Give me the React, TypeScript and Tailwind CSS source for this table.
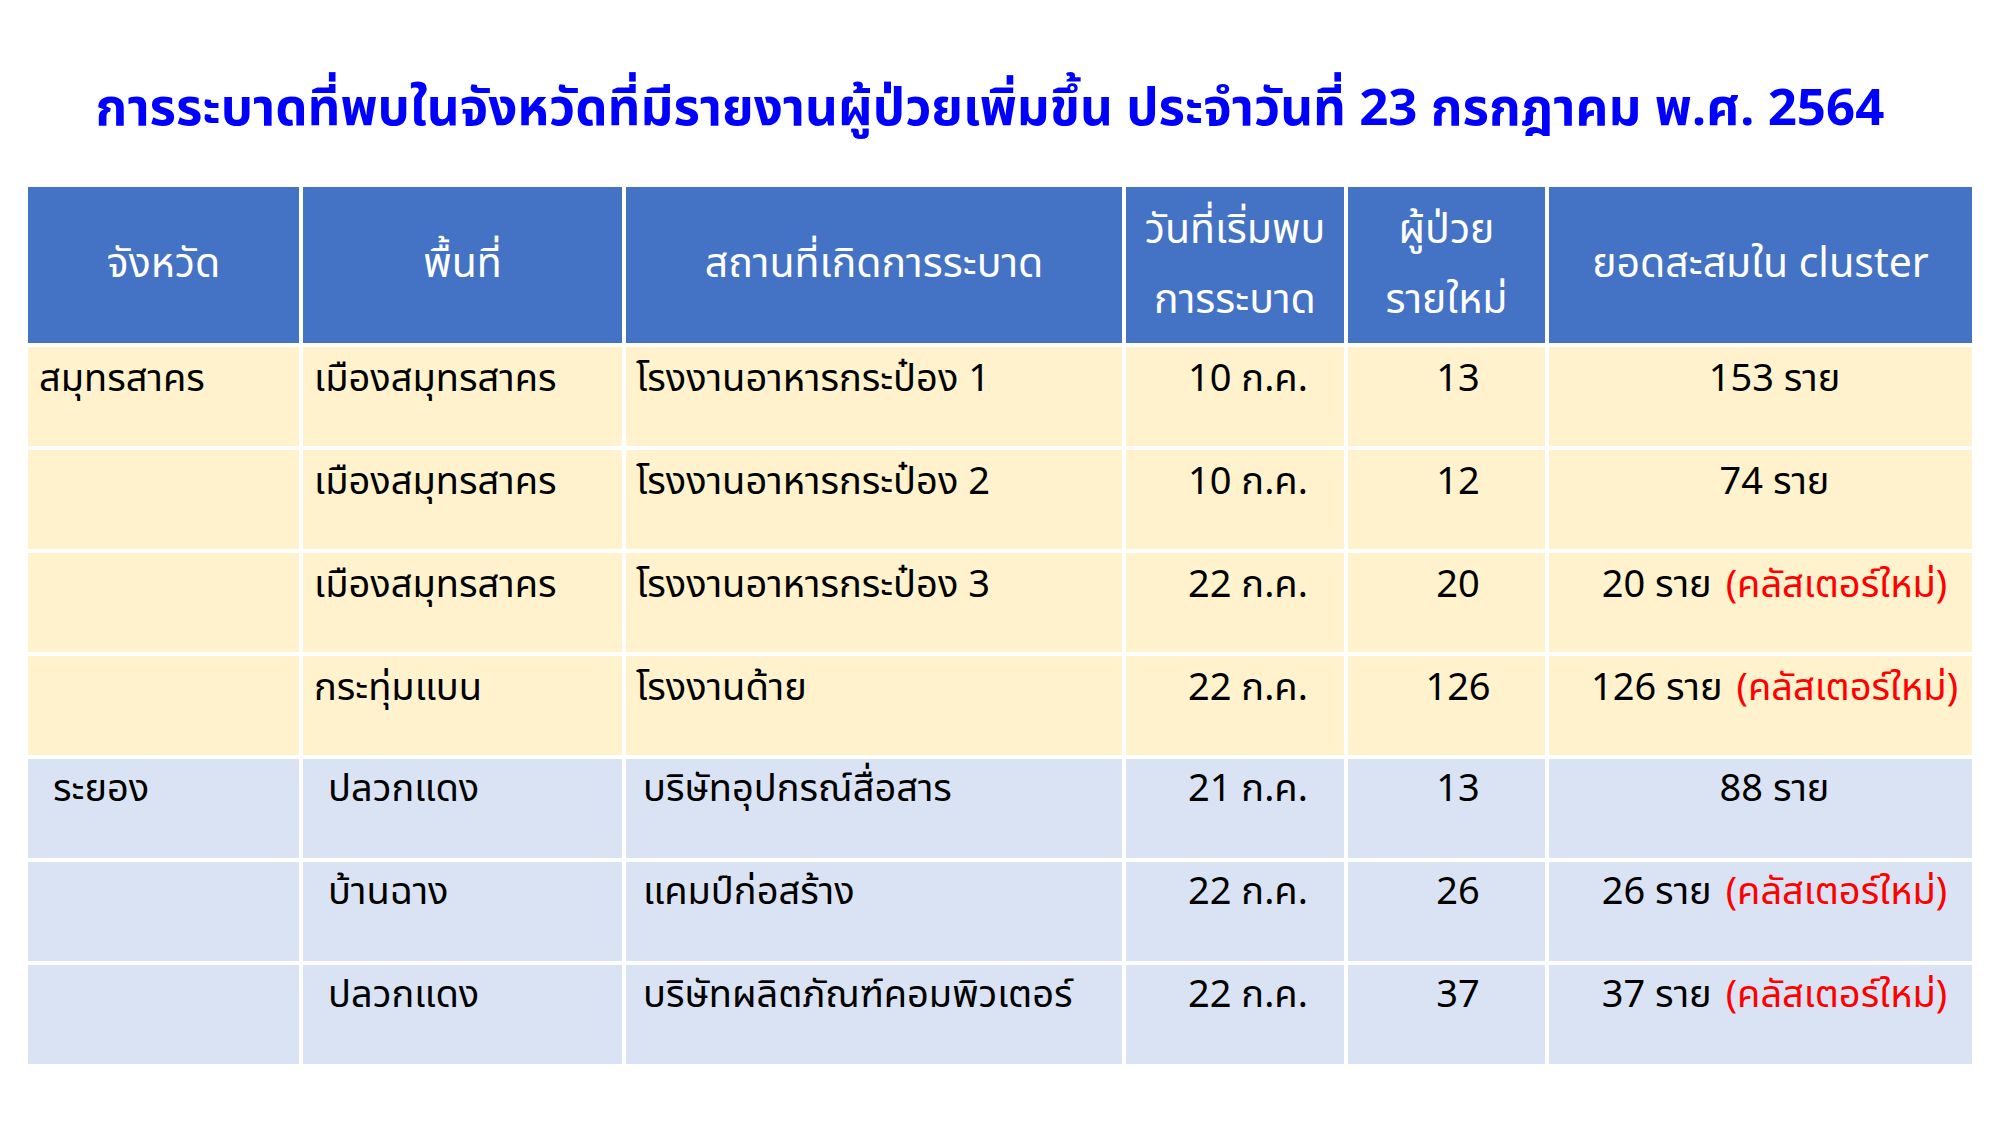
import React from 'react'

type Cell = { text: string; note?: string }
type Row = { tone: 'yellow' | 'blue'; cells: Cell[] }

const FONT = { fontFamily: '"Noto Sans Thai", "Leelawadee UI", Tahoma, "DejaVu Sans", "Noto Sans", sans-serif' }

const ROWS: Row[] = [
  { tone: 'yellow', cells: [{ text: 'สมุทรสาคร' }, { text: 'เมืองสมุทรสาคร' }, { text: 'โรงงานอาหารกระป๋อง 1' }, { text: '10 ก.ค.' }, { text: '13' }, { text: '153 ราย' }] },
  { tone: 'yellow', cells: [{ text: '' }, { text: 'เมืองสมุทรสาคร' }, { text: 'โรงงานอาหารกระป๋อง 2' }, { text: '10 ก.ค.' }, { text: '12' }, { text: '74 ราย' }] },
  { tone: 'yellow', cells: [{ text: '' }, { text: 'เมืองสมุทรสาคร' }, { text: 'โรงงานอาหารกระป๋อง 3' }, { text: '22 ก.ค.' }, { text: '20' }, { text: '20 ราย', note: '(คลัสเตอร์ใหม่)' }] },
  { tone: 'yellow', cells: [{ text: '' }, { text: 'กระทุ่มแบน' }, { text: 'โรงงานด้าย' }, { text: '22 ก.ค.' }, { text: '126' }, { text: '126 ราย', note: '(คลัสเตอร์ใหม่)' }] },
  { tone: 'blue', cells: [{ text: 'ระยอง' }, { text: 'ปลวกแดง' }, { text: 'บริษัทอุปกรณ์สื่อสาร' }, { text: '21 ก.ค.' }, { text: '13' }, { text: '88 ราย' }] },
  { tone: 'blue', cells: [{ text: '' }, { text: 'บ้านฉาง' }, { text: 'แคมป์ก่อสร้าง' }, { text: '22 ก.ค.' }, { text: '26' }, { text: '26 ราย', note: '(คลัสเตอร์ใหม่)' }] },
  { tone: 'blue', cells: [{ text: '' }, { text: 'ปลวกแดง' }, { text: 'บริษัทผลิตภัณฑ์คอมพิวเตอร์' }, { text: '22 ก.ค.' }, { text: '37' }, { text: '37 ราย', note: '(คลัสเตอร์ใหม่)' }] },
]

// ความกว้างคอลัมน์ (เส้นขาว 4px เป็น gap)
const COLS = 'grid-cols-[271px_319px_496px_218px_197px_423px]'

const ALIGN_Y = ['justify-start pl-[11px]', 'justify-start pl-[11px]', 'justify-start pl-[10px]', 'justify-start pl-[62px]', 'justify-center pl-[23px]', 'justify-center pl-[28px]']
const ALIGN_B = ['justify-start pl-[25px]', 'justify-start pl-[25px]', 'justify-start pl-[17px]', 'justify-start pl-[62px]', 'justify-center pl-[23px]', 'justify-center pl-[28px]']

const HEAD = 'bg-[#4472c4] text-white text-[41px] flex items-center justify-center'

export default function App() {
  return (
    <div className="w-[2000px] h-[1125px] bg-white" style={FONT}>
      <h1 className="pt-[84px] pr-[20px] h-[187px] text-center text-[#0000ff] text-[51px] font-bold leading-none whitespace-nowrap">
        การระบาดที่พบในจังหวัดที่มีรายงานผู้ป่วยเพิ่มขึ้น ประจำวันที่ 23 กรกฎาคม พ.ศ. 2564
      </h1>

      <div className="mx-[28px] w-[1944px] flex flex-col gap-[4px]">
        {/* หัวตาราง */}
        <div className={`grid ${COLS} gap-[4px] h-[156px]`}>
          <div className={HEAD}>จังหวัด</div>
          <div className={HEAD}>พื้นที่</div>
          <div className={HEAD}>สถานที่เกิดการระบาด</div>
          <div className={`${HEAD} flex-col leading-[70px]`}>
            <span>วันที่เริ่มพบ</span>
            <span>การระบาด</span>
          </div>
          <div className={`${HEAD} flex-col leading-[70px]`}>
            <span>ผู้ป่วย</span>
            <span>รายใหม่</span>
          </div>
          <div className={HEAD}>ยอดสะสมใน cluster</div>
        </div>

        {ROWS.map((r, i) => (
          <div key={i} className={`grid ${COLS} gap-[4px] h-[99px]`}>
            {r.cells.map((c, j) => (
              <div
                key={j}
                className={`${r.tone === 'yellow' ? 'bg-[#fff2cc] pt-[4px]' : 'bg-[#dae3f3] pt-[2px]'} ${r.tone === 'yellow' ? ALIGN_Y[j] : ALIGN_B[j]} flex items-start text-[38px] text-black whitespace-nowrap`}
              >
                <span>{c.text}</span>
                {c.note && <span className="text-[#ff0000] ml-[14px]">{c.note}</span>}
              </div>
            ))}
          </div>
        ))}
      </div>
    </div>
  )
}
